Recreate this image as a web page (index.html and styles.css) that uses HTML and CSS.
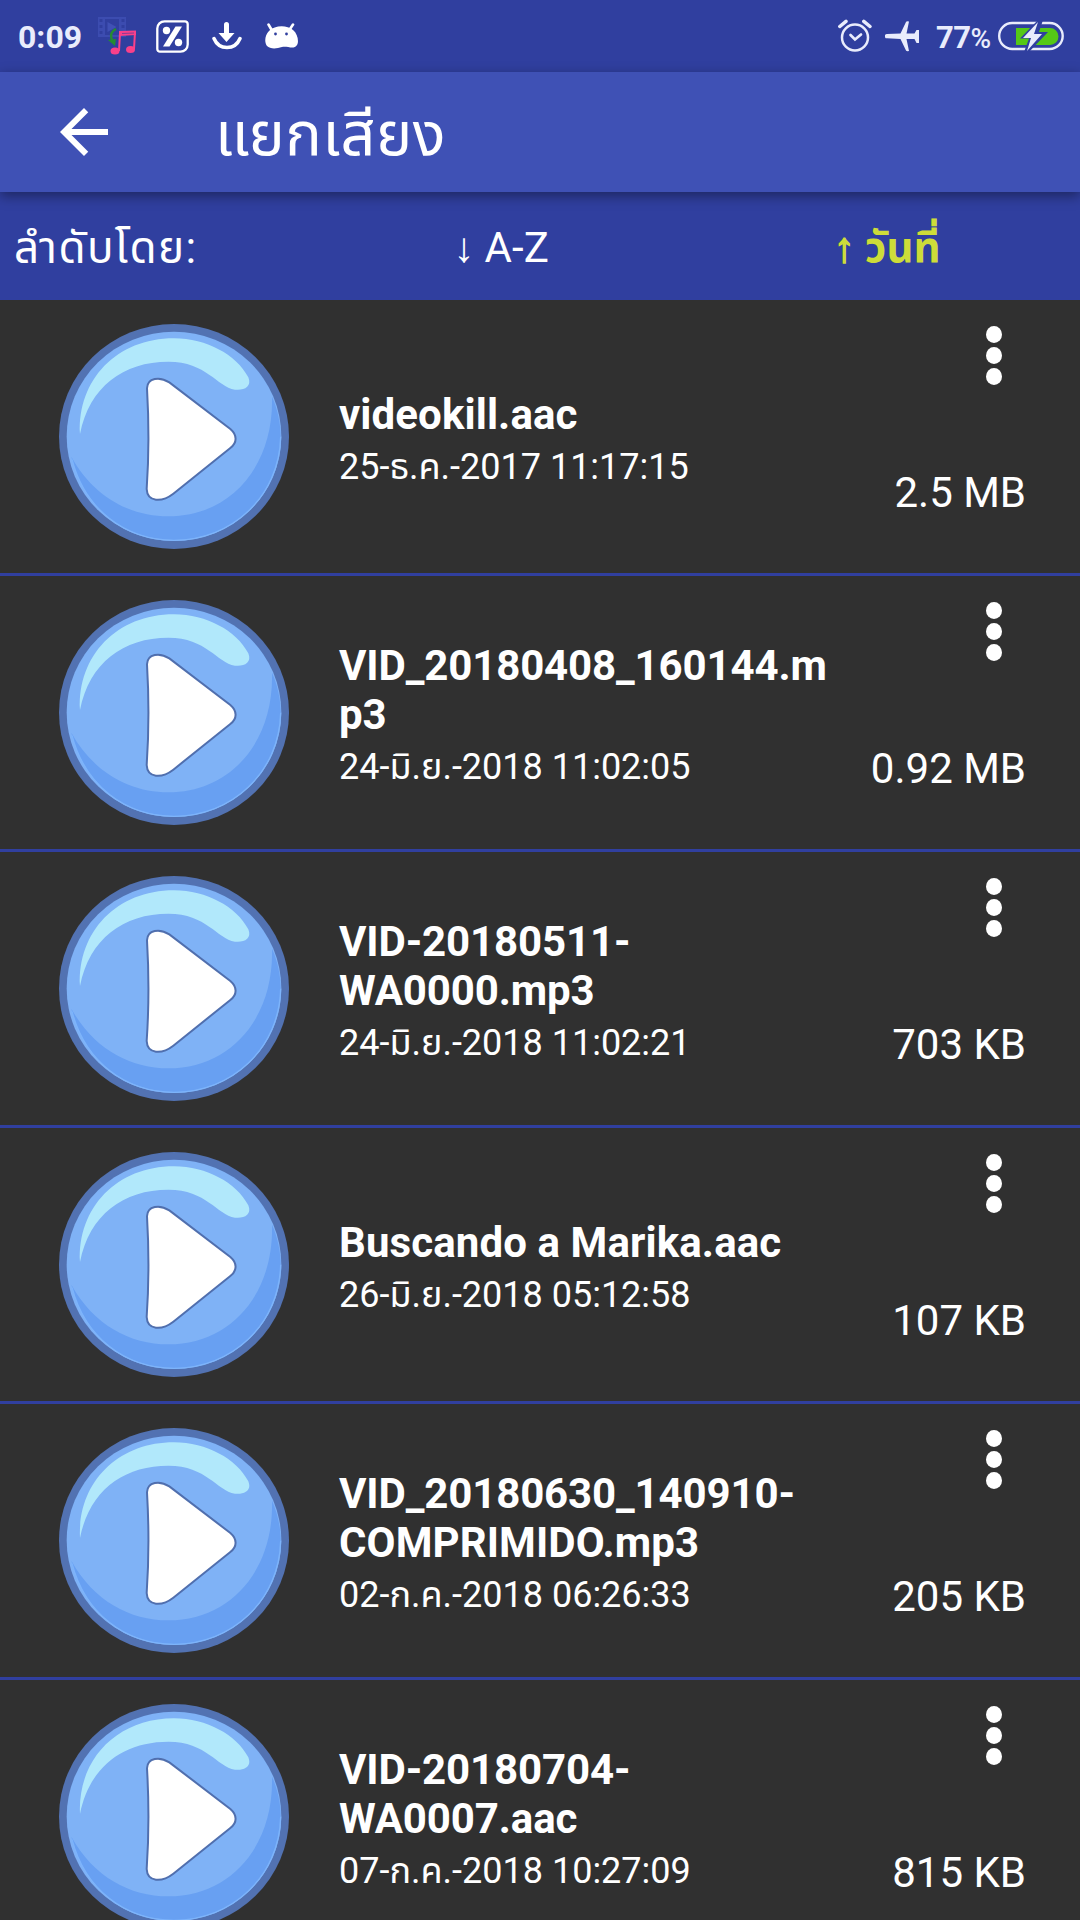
FILE: index.html
```html
<!DOCTYPE html>
<html lang="th">

<head>
    <meta charset="UTF-8" />
    <meta name="viewport" content="width=device-width, initial-scale=1.0" />
    <title>แยกเสียง</title>
    <link rel="stylesheet" href="styles.css">
</head>

<body>
    <svg class="symbols">
        <symbol id="play" viewBox="57 72 690 675" preserveAspectRatio="none">
            <ellipse cx="402" cy="409.500" rx="345" ry="337.500" fill="#5272b2" />
            <ellipse cx="402" cy="409" rx="322" ry="314" fill="#7fb2f6" />
            <path d="M94 470C160 590 270 649 385 649C570 649 702 500 696 290C712 325 722 368 722 410C720 590 575 720 402 720C250 720 130 620 94 470z" fill="#68a0f2" />
            <path d="M96 478C135 628 255 721 402 721C575 721 718 590 722 410" fill="none" stroke="#7db4fb" stroke-width="4" />
            <path d="M120 402C112 240 230 115 402 115C500 115 590 165 625 232C637 262 610 272 585 269C530 260 500 185 385 185C250 185 148 260 120 402z" fill="#b1e8fb" />
            <path d="M321 265C322 232 360 229 388 247L571 387C592 405 592 428 571 444L400 581C365 608 322 607 320 567C326 480 326 350 321 265z" fill="#fff" stroke="#506fae" stroke-width="6" />
        </symbol>
    </svg>
    <header class="status">
        <span class="clock">0:09</span>
        <svg class="st-media" width="40" height="40" viewBox="0 0 40 40">
            <path d="M1 1h28v20H1z" fill="#4051b5" opacity=".75" />
            <path d="M2.500 3h3v3h-3zM2.500 9h3v3h-3zM2.500 15h3v3h-3zM24.500 3h3v3h-3zM24.500 9h3v3h-3zM8 3h14v16H8z" fill="#303f9f" />
            <path d="M10.500 6l9 5-9 5z" fill="#4051b5" />
            <path d="M19 13c-6 3-6 8-3 13" fill="none" stroke="#258b31" stroke-width="2.500" />
            <path d="M11 24l8-1-1 7z" fill="#258b31" />
            <path d="M22 35l1-18 15-1-1 17" fill="none" stroke="#f9408a" stroke-width="2" />
            <path d="M22 15l17-.5v4.500L22 20z" fill="#f9408a" />
            <path d="M25 17.500l12-.5" stroke="#8a3b95" />
            <ellipse cx="18" cy="35" rx="4.500" ry="3.500" fill="#f9408a" />
            <ellipse cx="33.500" cy="33.500" rx="4.500" ry="3.500" fill="#f9408a" />
        </svg>
        <svg class="st-percent" width="33" height="33" viewBox="0 0 33 33" fill="#fff">
            <path d="M8.500 1.300H29a2.700 2.700 0 0 1 2.700 2.700v20.500a7.200 7.200 0 0 1-7.200 7.200H4A2.700 2.700 0 0 1 1.300 29V8.500a7.200 7.200 0 0 1 7.200-7.200z" fill="none" stroke="#fff" stroke-width="2.300" />
            <circle cx="10.500" cy="10.500" r="3.700" />
            <circle cx="22.500" cy="22.500" r="3.700" />
            <path d="M19.500 6.500h6.500L13.500 26.500H7z" />
        </svg>
        <svg class="st-down" width="30" height="28" viewBox="0 0 30 28" fill="#fff">
            <path d="M12 2.500a2.500 2.500 0 0 1 5 0v8.500h5.500L14.500 20l-8-9H12z" />
            <path d="M2 16.500c5 12 21 12 26 0" fill="none" stroke="#fff" stroke-width="3.500" stroke-linecap="round" />
        </svg>
        <svg class="st-droid" width="34" height="27" viewBox="0 0 34 27">
            <path d="M3.500 1.500l3.500 6M28 1.500l-4 6" stroke="#fff" stroke-width="2.600" stroke-linecap="round" />
            <path d="M4 8c6-6 18-6 24-1 5 4 6 12 4 15-3 5-9 1-15 2-6 2-12 2-15-1C-1 19 0 12 4 8z" fill="#fff" />
            <circle cx="10.500" cy="11" r="1.400" fill="#303f9f" />
            <circle cx="21.500" cy="11" r="1.400" fill="#303f9f" />
        </svg>
        <div class="status-right">
            <svg width="34" height="34" viewBox="0 0 34 34" fill="none" stroke="#e9ecfc" stroke-width="2.500" stroke-linecap="round">
                <circle cx="17" cy="18.500" r="13" />
                <path d="M12.500 16l4.500 4.500 6-5" stroke-width="2.700" />
                <path d="M1.800 7.500L8 2.300M32 7.500l-6.200-5.200" stroke-width="3.500" />
            </svg>
            <svg class="st-plane" width="35" height="31" viewBox="0 0 35 31">
                <path d="M2 13l13.500-.5L21 1q.5-1 3-.5l-2.500 12h8l2-3.500H34v13h-2.500l-2-4h-8L24 30q-2.500.5-3-.5L15.500 18 2 17.300a2.100 2.100 0 0 1 0-4.300z" fill="#e9ecfc" />
            </svg>
            <span class="percent">77<small>%</small></span>
            <svg class="st-battery" width="66" height="32" viewBox="0 0 66 32">
                <rect x="1.200" y="3" width="63.500" height="26" rx="13" fill="none" stroke="#e9ecfc" stroke-width="2.400" />
                <path d="M18 8h34a8 8 0 0 1 0 17H18z" fill="#55c816" />
                <path d="M40 0L22 18.500h9L26 32h5l19-20h-9l4-12z" fill="#303f9f" />
                <path d="M40 2L25 18h8l-4 13 15-17h-8z" fill="#e9ecfc" />
            </svg>
        </div>
    </header>
    <nav class="toolbar">
        <svg class="back" width="72" height="72" viewBox="0 0 24 24" fill="#fff">
            <path d="M20 11H7.830l5.590-5.590L12 4l-8 8 8 8 1.410-1.410L7.830 13H20v-2z" />
        </svg>
        <h1>แยกเสียง</h1>
    </nav>
    <div class="sort">
        <span class="sort-label">ลำดับโดย:</span>
        <span class="sort-item">↓ A-Z</span>
        <span class="sort-item active"><b class="arrow">↑</b> วันที่</span>
    </div>
    <main>
        <section class="row">
            <svg class="play"><use href="#play" /></svg>
            <div class="info">
                <h2>videokill.aac</h2>
                <p>25-ธ.ค.-2017 11:17:15</p>
            </div>
            <div class="side">
                <div class="dots"><i></i><i></i><i></i></div>
                <span class="size">2.5 MB</span>
            </div>
        </section>
        <section class="row">
            <svg class="play"><use href="#play" /></svg>
            <div class="info">
                <h2 class="vid">VID_20180408_160144.m<br>p3</h2>
                <p>24-มิ.ย.-2018 11:02:05</p>
            </div>
            <div class="side">
                <div class="dots"><i></i><i></i><i></i></div>
                <span class="size">0.92 MB</span>
            </div>
        </section>
        <section class="row">
            <svg class="play"><use href="#play" /></svg>
            <div class="info">
                <h2 class="vid">VID-20180511-<br>WA0000.mp3</h2>
                <p>24-มิ.ย.-2018 11:02:21</p>
            </div>
            <div class="side">
                <div class="dots"><i></i><i></i><i></i></div>
                <span class="size">703 KB</span>
            </div>
        </section>
        <section class="row">
            <svg class="play"><use href="#play" /></svg>
            <div class="info">
                <h2>Buscando a Marika.aac</h2>
                <p>26-มิ.ย.-2018 05:12:58</p>
            </div>
            <div class="side">
                <div class="dots"><i></i><i></i><i></i></div>
                <span class="size">107 KB</span>
            </div>
        </section>
        <section class="row">
            <svg class="play"><use href="#play" /></svg>
            <div class="info">
                <h2><span class="vid">VID_20180630_140910-</span><br>COMPRIMIDO.mp3</h2>
                <p>02-ก.ค.-2018 06:26:33</p>
            </div>
            <div class="side">
                <div class="dots"><i></i><i></i><i></i></div>
                <span class="size">205 KB</span>
            </div>
        </section>
        <section class="row">
            <svg class="play"><use href="#play" /></svg>
            <div class="info">
                <h2 class="vid">VID-20180704-<br>WA0007.aac</h2>
                <p>07-ก.ค.-2018 10:27:09</p>
            </div>
            <div class="side">
                <div class="dots"><i></i><i></i><i></i></div>
                <span class="size">815 KB</span>
            </div>
        </section>
    </main>
</body>

</html>
```
FILE: styles.css
```css
* {
    box-sizing: border-box;
    margin: 0;
    padding: 0;
}

body {
    height: 1920px;
    overflow: hidden;
    background-color: #303030;
    color: #fff;
    font-family: Roboto, "Noto Sans Thai", "Noto Sans", sans-serif;
}

svg {
    display: block;
    flex: none;
}

.symbols {
    position: absolute;
    width: 0;
    height: 0;
}

/* status bar */
.status {
    display: flex;
    align-items: center;
    height: 72px;
    padding: 0 16px 0 18px;
    background-color: #303f9f;
}

.clock {
    width: 79px;
    padding-top: 2px;
    color: #e9ecfc;
    font-size: 32px;
    font-weight: 700;
}

.st-media {
    margin-right: 19px;
}

.st-percent {
    margin-right: 23px;
}

.st-down {
    margin-right: 23px;
}

.status-right {
    display: flex;
    align-items: center;
    margin-left: auto;
}

.st-plane {
    margin: 0 16px 0 13px;
}

.percent {
    width: 62px;
    padding-top: 2px;
    color: #e9ecfc;
    font-size: 31px;
    font-weight: 700;
    letter-spacing: -0.5px;
}

.percent small {
    font-size: 28px;
    font-weight: 500;
}

/* toolbar */
.toolbar {
    position: relative;
    z-index: 1;
    display: flex;
    align-items: center;
    height: 120px;
    padding-left: 48px;
    background-color: #3f51b5;
    box-shadow: 0 4px 12px rgba(0, 0, 0, 0.4);
}

.toolbar h1 {
    margin-left: 95px;
    padding-top: 4px;
    font-size: 61px;
    font-weight: 400;
    line-height: 70px;
    letter-spacing: 0.6px;
}

.sort {
    display: flex;
    align-items: center;
    height: 108px;
    padding-top: 4px;
    background-color: #303f9f;
    font-size: 42px;
    line-height: 50px;
}

.sort-label {
    width: 308px;
    padding-left: 14px;
    font-size: 44px;
    letter-spacing: 1.4px;
}

.sort-item {
    width: 386px;
    text-align: center;
}

.sort-item.active {
    color: #cddc39;
    font-weight: 700;
}

.arrow {
    -webkit-text-stroke: 1.5px #cddc39;
}

/* list */
.row {
    display: flex;
    height: 276px;
    padding: 24px 54px 0 59px;
    border-bottom: 3px solid #303f9f;
}

.play {
    width: 230px;
    height: 225px;
}

.info {
    display: flex;
    flex: 1;
    flex-direction: column;
    justify-content: center;
    height: 225px;
    padding: 9px 0 0 50px;
    white-space: nowrap;
}

.info h2 {
    font-size: 42px;
    font-weight: 700;
    line-height: 49px;
    letter-spacing: 0.1px;
}

.info .vid {
    letter-spacing: -0.12px;
}

.info p {
    height: 54px;
    font-size: 36px;
    line-height: 56px;
}

.side {
    display: flex;
    flex-direction: column;
    align-items: flex-end;
}

.dots {
    display: flex;
    flex-direction: column;
    gap: 4px;
    padding: 2px 24px 0 0;
}

.dots i {
    width: 16px;
    height: 17px;
    border-radius: 50%;
    background-color: #fff;
}

.size {
    margin-top: 83px;
    font-size: 42px;
    line-height: 49px;
}
```
